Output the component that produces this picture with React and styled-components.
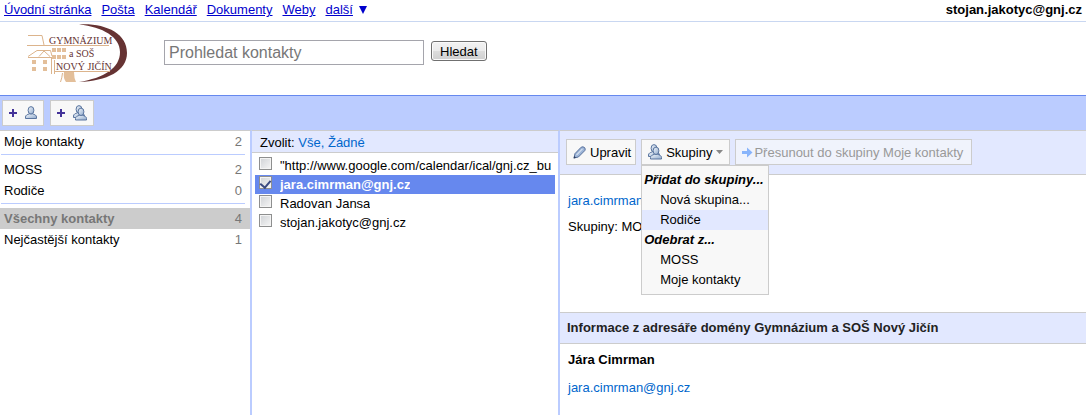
import React, { useState } from 'react'
import styled, { createGlobalStyle } from 'styled-components';

const navLinks = ['Úvodní stránka', 'Pošta', 'Kalendář', 'Dokumenty', 'Weby'];

const groupBlocks = [
  [{ name: 'Moje kontakty', count: 2 }],
  [{ name: 'MOSS', count: 2 }, { name: 'Rodiče', count: 0 }],
  [{ name: 'Všechny kontakty', count: 4 }, { name: 'Nejčastější kontakty', count: 1 }],
];

const contacts = [
  '"http://www.google.com/calendar/ical/gnj.cz_bu',
  'jara.cimrman@gnj.cz',
  'Radovan Jansa',
  'stojan.jakotyc@gnj.cz',
];

const PersonShape = () => (
  <>
    <path d="M.5 12.5 V11 C.5 9.2 2.2 8.6 4.4 7.8 L7.6 7.8 C9.8 8.6 11.5 9.2 11.5 11 V12.5 Z" />
    <ellipse cx="6" cy="4.3" rx="2.9" ry="3.7" />
  </>
);

const PersonDefs = ({ id }) => (
  <defs>
    <linearGradient id={id} x1="0" y1="0" x2="1" y2="1">
      <stop offset="0" stopColor="#f4f8fc" />
      <stop offset="1" stopColor="#8fa9cc" />
    </linearGradient>
  </defs>
);

const PersonIcon = () => (
  <svg width="12" height="14" viewBox="0 0 12 14" aria-hidden="true">
    <PersonDefs id="person" />
    <g fill="url(#person)" stroke="#5a759f">
      <PersonShape />
    </g>
  </svg>
);

const PeopleIcon = ({ id }) => (
  <svg width="14" height="16" viewBox="0 0 14 16" aria-hidden="true">
    <PersonDefs id={id} />
    <g fill={`url(#${id})`} stroke="#5a759f">
      <PersonShape />
      <g transform="translate(2 2.5)">
        <PersonShape />
      </g>
    </g>
  </svg>
);

const PlusIcon = () => (
  <svg width="8" height="8" viewBox="0 0 8 8" aria-hidden="true">
    <path d="M3 0 H5 V3 H8 V5 H5 V8 H3 V5 H0 V3 H3 Z" fill="#443399" />
  </svg>
);

const PencilIcon = () => (
  <svg width="13" height="13" viewBox="0 0 13 13" aria-hidden="true">
    <path d="M1 12 L2 7.6 L8.2 1.2 Q10 .2 11.6 1.6 Q12.8 3.2 11.8 4.6 L5.4 11 Z" fill="#9db5d8" stroke="#566f9a" />
    <path d="M3.4 9.2 L9.6 2.8" stroke="#f4f8fc" />
    <path d="M.6 12.4 L1.2 10 L3 11.8 Z" fill="#2b3b5c" />
  </svg>
);

const ArrowIcon = () => (
  <svg width="11" height="11" viewBox="0 0 11 11" aria-hidden="true">
    <path d="M0 4 H5 V.5 L10.5 5.5 L5 10.5 V7 H0 Z" fill="#88b4fb" />
  </svg>
);

const Logo = () => (
  <svg width="104" height="62" viewBox="0 0 104 62" role="img" aria-label="Gymnázium a SOŠ Nový Jičín">
    <path d="M52 .5 C78 -1 100 9 100 29 C100 47 80 57 52 58 C77 54 93 44 93 28 C93 13 76 3 52 .5 Z" fill="#663333" />
    <g stroke="#dcb48c" fill="none">
      <path d="M1 11.5 H15 L17 21 M0 21.5 H82" />
      <path d="M1 32.5 L10 26.5 H23.5 L25 32 M12 32.5 L17 27 L23 32.5 M1 33.5 H25" />
      <path d="M24.5 34 V50 M27.5 36 V50 M28 47.5 H83" />
    </g>
    <g fill="#e3bf9a">
      <path d="M25 24h4v4h-4z M30 24h4v4h-4z M35 24h4v4h-4z M25 31h4v4h-4z M30 31h4v4h-4z M35 31h4v4h-4z" />
      <path d="M5 36h4v4h-4z M16 36h4v4h-4z M5 43h4v4h-4z M16 43h4v4h-4z" />
      <path d="M37 48 H47 Q47 54 49 58 H39 Q36 54 37 48 Z" />
    </g>
    <path d="M35.5 49 Q35 54 33.5 58" stroke="#dcb48c" fill="none" />
    <g fill="#663333" fontFamily="'Liberation Serif', serif" fontSize="10">
      <text x="22" y="20">GYMNÁZIUM</text>
      <text x="42" y="33">a SOŠ</text>
      <text x="29" y="46">NOVÝ JIČÍN</text>
    </g>
  </svg>
);

const App = () => {
  const [keyword, setKeyword] = useState('');
  const [activeGroup, setActiveGroup] = useState('Všechny kontakty');
  const [selected, setSelected] = useState(['jara.cimrman@gnj.cz']);
  const [menuOpen, setMenuOpen] = useState(true);

  const toggle = (name) => {
    setSelected(selected.includes(name) ? selected.filter((n) => n !== name) : [...selected, name]);
  }

  return (
    <>
      <GlobalStyle />
      <TopBar>
        <TopNav>
          {navLinks.map((item) => <NavLink href="#" key={item}>{item}</NavLink>)}
          <More>
            <NavLink href="#">další</NavLink>
            <svg width="8" height="8" viewBox="0 0 8 8" aria-hidden="true">
              <path d="M0 0 H8 L4 8 Z" fill="#0000cc" />
            </svg>
          </More>
        </TopNav>
        <Account>stojan.jakotyc@gnj.cz</Account>
      </TopBar>

      <Header>
        <Logo />
        <SearchForm onSubmit={(e) => e.preventDefault()}>
          <SearchInput value={keyword} onChange={(e) => setKeyword(e.target.value)} />
          <SearchBtn>Hledat</SearchBtn>
        </SearchForm>
      </Header>

      <ActionBar>
        <IconButton aria-label="Nový kontakt"><PlusIcon /><PersonIcon /></IconButton>
        <IconButton aria-label="Nová skupina"><PlusIcon /><PeopleIcon id="newgroup" /></IconButton>
      </ActionBar>

      <Columns>
        <Groups>
          {groupBlocks.map((block) => (
            <GroupBlock key={block[0].name}>
              {block.map((group) => (
                <GroupRow
                  key={group.name}
                  $active={group.name === activeGroup}
                  onClick={() => setActiveGroup(group.name)}
                >
                  <span>{group.name}</span>
                  <Count>{group.count}</Count>
                </GroupRow>
              ))}
            </GroupBlock>
          ))}
        </Groups>

        <ContactList>
          <ListHeader>
            Zvolit: <Link href="#" onClick={() => setSelected(contacts)}>Vše</Link>
            <Comma>, </Comma>
            <Link href="#" onClick={() => setSelected([])}>Žádné</Link>
          </ListHeader>
          <Rows>
            {contacts.map((name) => (
              <ContactRow key={name} $selected={selected.includes(name)}>
                <Checkbox checked={selected.includes(name)} onChange={() => toggle(name)} />
                <ContactName>{name}</ContactName>
              </ContactRow>
            ))}
          </Rows>
        </ContactList>

        <Detail>
          <DetailBar>
            <ToolButton><PencilIcon />Upravit</ToolButton>
            <MenuWrap>
              <MenuButton aria-expanded={menuOpen} onClick={() => setMenuOpen(!menuOpen)}>
                <PeopleIcon id="groups" />Skupiny
                <svg width="7" height="4" viewBox="0 0 7 4" aria-hidden="true">
                  <path d="M0 0 H7 L3.5 4 Z" fill="#888" />
                </svg>
              </MenuButton>
              {menuOpen && (
                <Menu>
                  <MenuTitle>Přidat do skupiny...</MenuTitle>
                  <MenuItem>Nová skupina...</MenuItem>
                  <MenuItem $hover>Rodiče</MenuItem>
                  <MenuTitle>Odebrat z...</MenuTitle>
                  <MenuItem>MOSS</MenuItem>
                  <MenuItem>Moje kontakty</MenuItem>
                </Menu>
              )}
            </MenuWrap>
            <MoveButton disabled><ArrowIcon />Přesunout do skupiny Moje kontakty</MoveButton>
          </DetailBar>
          <Summary>
            <Link href="#">jara.cimrman@gnj.cz</Link>
            <span>Skupiny: MOSS</span>
          </Summary>
          <SectionTitle>Informace z adresáře domény Gymnázium a SOŠ Nový Jičín</SectionTitle>
          <Info>
            <strong>Jára Cimrman</strong>
            <Link href="#">jara.cimrman@gnj.cz</Link>
          </Info>
        </Detail>
      </Columns>
    </>
  )
}

export default App;

const GlobalStyle = createGlobalStyle`
  * {
    box-sizing: border-box;
  }
  html, body, #root {
    height: 100%;
  }
  body {
    margin: 0;
    background: #fff;
    color: #000;
    font: 13px/20px "Liberation Sans", Arial, sans-serif;
  }
  #root {
    display: flex;
    flex-direction: column;
  }
  button, input {
    font: inherit;
    color: inherit;
  }
  svg {
    flex: none;
  }
`

const TopBar = styled.div`
  display: flex;
  justify-content: space-between;
  height: 22px;
  padding: 0 4px;
  border-bottom: 1px solid #c9d7f1;
`
const TopNav = styled.nav`
  display: flex;
  align-items: flex-start;
  gap: 10px;
`
const NavLink = styled.a`
  color: #0000cc;
`
const More = styled.span`
  display: flex;
  align-items: center;
  gap: 6px;
`
const Account = styled.b`
  white-space: nowrap;
`

const Header = styled.header`
  display: flex;
  align-items: flex-start;
  gap: 33px;
  padding: 2px 0 9px 27px;
`
const SearchForm = styled.form`
  display: flex;
  align-items: flex-start;
  gap: 7px;
  padding-top: 16px;
`
const SearchInput = styled.input.attrs({ type: 'text', placeholder: 'Prohledat kontakty', 'aria-label': 'Prohledat kontakty' })`
  width: 260px;
  height: 25px;
  padding: 0 4px;
  border: 1px solid #a5a5ac;
  font-size: 16px;
  &::placeholder {
    color: #777;
    opacity: 1;
  }
`
const SearchBtn = styled.button`
  height: 20px;
  margin-top: 1px;
  padding: 1px 8px 0;
  border: 1px solid #707070;
  border-radius: 3px;
  background: linear-gradient(#f2f2f2 0%, #ebebeb 50%, #dddddd 50%, #cfcfcf 100%);
  box-shadow: inset 0 0 0 1px #fafafa;
  line-height: 18px;
`

const ActionBar = styled.div`
  display: flex;
  gap: 6px;
  padding: 4px 2px;
  border-top: 1px solid #6688ee;
  background: #bbccff;
`
const ToolButton = styled.button.attrs({ type: 'button' })`
  display: flex;
  align-items: center;
  gap: 4px;
  height: 26px;
  padding: 2px 4px 0 6px;
  border: 1px solid #ccc;
  background: #f8f8f8;
  white-space: nowrap;
  svg {
    margin-bottom: 2px;
  }
`
const IconButton = styled(ToolButton)`
  gap: 8px;
  padding: 0 6px;
  svg {
    margin: 0;
  }
`
const MenuButton = styled(ToolButton)`
  padding: 2px 6px 0;
`
const MoveButton = styled(ToolButton)`
  gap: 1px;
  padding: 2px 8px 0 6px;
  color: #999;
  background: #f0f3fc;
`

const Columns = styled.main`
  display: flex;
  flex: 1;
`
const Groups = styled.div`
  flex: none;
  width: 252px;
  border-top: 1px solid #ccc;
  border-right: 2px solid #bbccff;
`
const GroupBlock = styled.div`
  & + & {
    padding-top: 7px;
    background: linear-gradient(#bbccff, #bbccff) 1px 2px / calc(100% - 6px) 1px no-repeat;
  }
`
const GroupRow = styled.button.attrs({ type: 'button' })`
  display: flex;
  justify-content: space-between;
  width: 100%;
  height: 21px;
  padding: 0 8px 0 4px;
  border: 0;
  background: ${(props) => (props.$active ? '#ccc' : 'transparent')};
  line-height: 21px;
  span:first-child {
    color: ${(props) => (props.$active ? '#777' : '#000')};
    font-weight: ${(props) => (props.$active ? 'bold' : 'normal')};
  }
`
const Count = styled.span`
  color: #777;
`

const ContactList = styled.div`
  flex: none;
  width: 308px;
  border-top: 1px solid #ccc;
  border-right: 2px solid #bbccff;
`
const ListHeader = styled.div`
  height: 22px;
  padding: 2px 8px 0;
  border-bottom: 1px solid #ccc;
  background: #e2e8ff;
`
const Link = styled.a`
  color: #0066cc;
  text-decoration: none;
`
const Comma = styled.span`
  color: #0066cc;
`
const Rows = styled.div`
  padding: 3px;
`
const ContactRow = styled.label`
  display: flex;
  gap: 8px;
  height: 19px;
  padding: 1px 0 0 4px;
  background: ${(props) => (props.$selected ? '#6688ee' : '#fff')};
  color: ${(props) => (props.$selected ? '#fff' : '#000')};
  font-weight: ${(props) => (props.$selected ? 'bold' : 'normal')};
  line-height: 18px;
`
const Checkbox = styled.input.attrs({ type: 'checkbox' })`
  appearance: none;
  flex: none;
  width: 13px;
  height: 13px;
  margin: 0;
  border: 1px solid #8e8f8f;
  background: linear-gradient(135deg, #cfd2d6, #f6f6f6);
  box-shadow: inset 0 0 0 1px #f4f4f4;
  &:checked {
    display: flex;
    justify-content: center;
    padding-top: 1px;
  }
  &:checked:after {
    content: "";
    width: 5px;
    height: 8px;
    border: solid #3b4a80;
    border-width: 0 2px 2px 0;
    transform: rotate(40deg);
  }
`
const ContactName = styled.span`
  overflow: hidden;
  white-space: nowrap;
`

const Detail = styled.section`
  flex: 1;
  min-width: 0;
  border-top: 1px solid #ccc;
`
const DetailBar = styled.div`
  display: flex;
  gap: 5px;
  height: 44px;
  padding: 8px 6px;
  border-bottom: 1px solid #ccc;
  background: #e2e8ff;
`
const MenuWrap = styled.div`
  position: relative;
`
const Menu = styled.div`
  position: absolute;
  top: 26px;
  left: 0;
  padding: 4px 0;
  border: 1px solid #ccc;
  background: #f8f8f8;
  white-space: nowrap;
`
const MenuTitle = styled.div`
  padding: 0 2px;
  font-weight: bold;
  font-style: italic;
`
const MenuItem = styled.button.attrs({ type: 'button' })`
  display: block;
  width: 100%;
  padding: 0 18px;
  border: 0;
  background: ${(props) => (props.$hover ? '#e2e8ff' : 'transparent')};
  text-align: left;
`
const Summary = styled.div`
  display: flex;
  flex-direction: column;
  align-items: flex-start;
  gap: 6px;
  min-height: 137px;
  padding: 16px 8px;
`
const SectionTitle = styled.h2`
  margin: 0;
  padding: 5px 7px;
  border: solid #ccc;
  border-width: 1px 0;
  background: #e2e8ff;
  color: #222;
  font-size: 13px;
`
const Info = styled.div`
  display: flex;
  flex-direction: column;
  align-items: flex-start;
  gap: 8px;
  padding: 6px 8px;
`
